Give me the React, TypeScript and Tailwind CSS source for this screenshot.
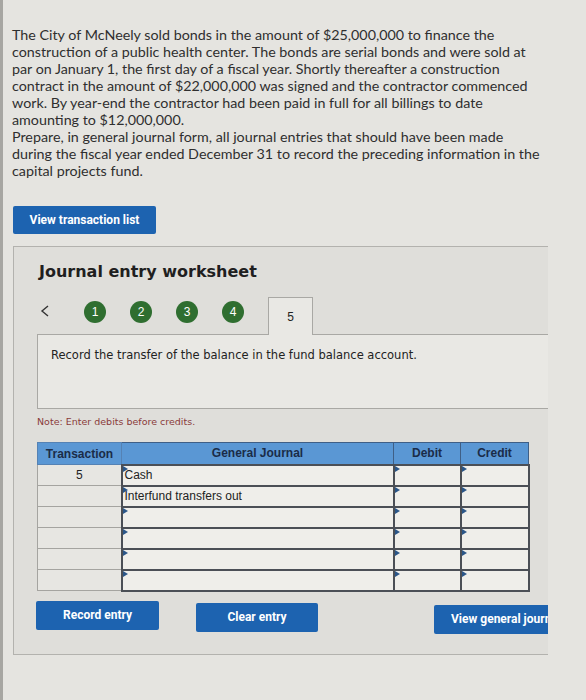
import React from "react";

const rows = [
  { tx: "5", account: "Cash" },
  { tx: "", account: "Interfund transfers out" },
  { tx: "", account: "" },
  { tx: "", account: "" },
  { tx: "", account: "" },
  { tx: "", account: "" },
];

function Marker() {
  return (
    <span className="absolute left-0 top-0 w-0 h-0 border-y-[3px] border-y-transparent border-l-[5px] border-l-[#2b5688]" />
  );
}

function InputCell({ children }: { children?: React.ReactNode }) {
  return (
    <td className="relative border-2 border-[#4b4f56] bg-[#efeeea] p-0 pl-[2px] text-left align-middle">
      <Marker />
      {children}
    </td>
  );
}

export default function App() {
  return (
    <div className="min-h-[700px] w-[586px] bg-[#e5e4e0] border-l-[3px] border-[#a7a6a2] pb-[48px] overflow-hidden">
      {/* Problem text */}
      <div className="pl-[9px] pt-[26px] text-[14.3px] leading-[17px] text-[#2f2f2f] font-['Lato',sans-serif]">
        <p>
          The City of McNeely sold bonds in the amount of $25,000,000 to finance the
          <br />
          construction of a public health center. The bonds are serial bonds and were sold at
          <br />
          par on January 1, the first day of a fiscal year. Shortly thereafter a construction
          <br />
          contract in the amount of $22,000,000 was signed and the contractor commenced
          <br />
          work. By year-end the contractor had been paid in full for all billings to date
          <br />
          amounting to $12,000,000.
        </p>
        <p>
          Prepare, in general journal form, all journal entries that should have been made
          <br />
          during the fiscal year ended December 31 to record the preceding information in the
          <br />
          capital projects fund.
        </p>
      </div>

      <button className="ml-[10px] mt-[27px] h-[28px] w-[143px] rounded-[2px] bg-[#1d63b0] text-[12px] font-bold text-white font-['Roboto',sans-serif]">
        View transaction list
      </button>

      {/* Worksheet panel */}
      <div className="ml-[10px] mt-[12px] w-[535px] overflow-hidden border-y border-l border-[#b3b2ae] bg-[#dfdeda] pl-[23px] pt-[14px] pb-[20px] font-['DejaVu_Sans',sans-serif]">
        <h2 className="text-[16px] leading-[22px] font-bold text-[#1f1f1f] ml-[2px]">Journal entry worksheet</h2>

        {/* Tabs */}
        <div className="mt-[14px] flex items-start h-[37px] relative z-10">
          <svg className="ml-[3px] mt-[8px] shrink-0" width="10" height="12" viewBox="0 0 10 12" fill="none">
            <path d="M8 1 L2 6 L8 11" stroke="#333" strokeWidth="1.4" />
          </svg>
          {[1, 2, 3, 4].map((n, i) => (
            <span
              key={n}
              className={`${i === 0 ? "ml-[34px]" : "ml-[24px]"} mt-[4px] flex h-[22px] w-[22px] shrink-0 items-center justify-center rounded-full bg-[#2f6e30] text-[12px] text-white font-['Liberation_Sans',sans-serif]`}
            >
              {n}
            </span>
          ))}
          <span className="ml-[24px] h-[38px] flex w-[45px] shrink-0 items-center justify-center border-x border-t border-[#a9a8a4] bg-[#e9e8e4] text-[12px] text-[#222] font-['Liberation_Sans',sans-serif]">
            5
          </span>
        </div>
        <div className="h-[75px] border border-r-0 border-[#a9a8a4] bg-[#e9e8e4] pl-[13px] pt-[13px] text-[11.5px] leading-[14px] text-[#222]">
          Record the transfer of the balance in the fund balance account.
        </div>

        <p className="mt-[7px] text-[9.5px] leading-[12px] text-[#8a3b3b]">Note: Enter debits before credits.</p>

        {/* Journal table */}
        <table className="mt-[14px] w-[491px] table-fixed border-collapse text-[12px] font-['Liberation_Sans',sans-serif] text-[#222]">
          <colgroup>
            <col className="w-[84px]" />
            <col className="w-[272px]" />
            <col className="w-[67px]" />
            <col className="w-[68px]" />
          </colgroup>
          <thead>
            <tr className="h-[22px] bg-[#5a97d4] text-[#1a2c48] font-bold">
              <th className="border border-[#5582b4] font-bold">Transaction</th>
              <th className="border border-[#3f5f86] font-bold">General Journal</th>
              <th className="border border-[#3f5f86] font-bold">Debit</th>
              <th className="border border-[#3f5f86] font-bold">Credit</th>
            </tr>
          </thead>
          <tbody>
            {rows.map((r, i) => (
              <tr key={i} className="h-[21px]">
                <td className="border border-[#a5a4a0] bg-[#e7e6e2] text-center">{r.tx}</td>
                <InputCell>{r.account}</InputCell>
                <InputCell />
                <InputCell />
              </tr>
            ))}
          </tbody>
        </table>

        {/* Buttons */}
        <div className="mt-[9px] flex items-start font-['Roboto',sans-serif] text-[12px] font-bold text-white">
          <button className="-ml-[1px] h-[29px] w-[123px] shrink-0 rounded-[2px] bg-[#1d63b0]">Record entry</button>
          <button className="ml-[37px] mt-[2px] h-[29px] w-[122px] shrink-0 rounded-[2px] bg-[#1d63b0]">Clear entry</button>
          <button className="ml-[116px] mt-[4px] h-[29px] w-[140px] shrink-0 rounded-l-[2px] bg-[#1d63b0] pl-[17px] text-left whitespace-nowrap">
            View general journal
          </button>
        </div>
      </div>
    </div>
  );
}
